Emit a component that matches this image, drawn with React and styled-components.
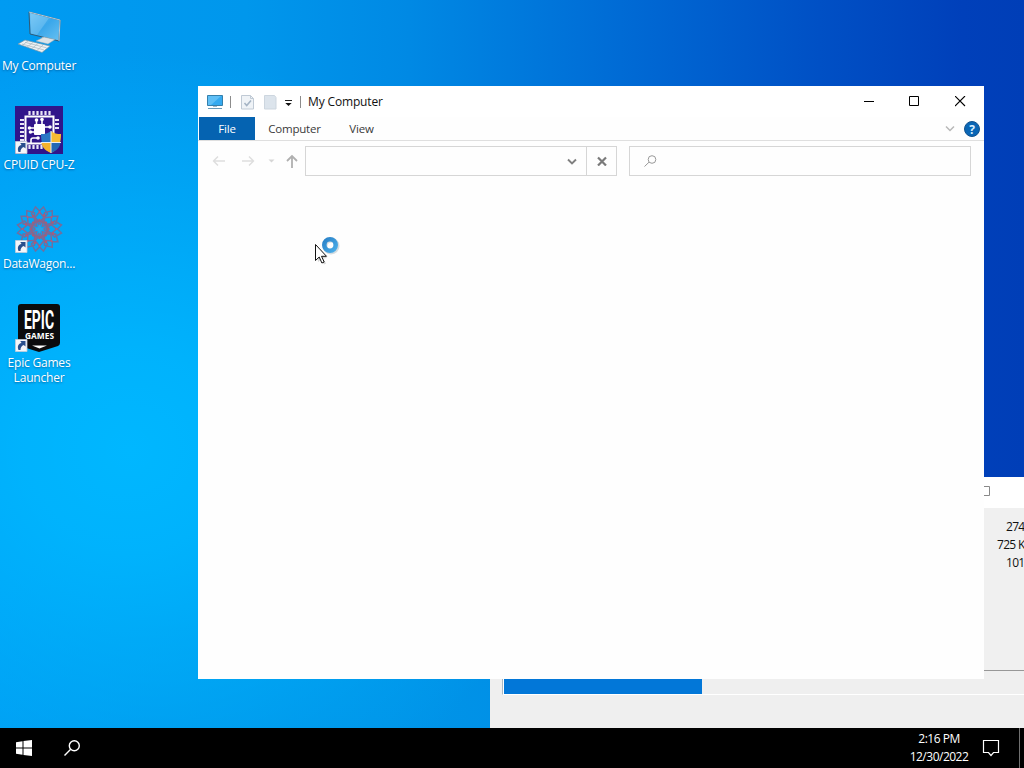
import React from 'react'
import styled, { createGlobalStyle } from 'styled-components'

const GlobalStyle = createGlobalStyle`
  * {
    box-sizing: border-box;
  }

  body {
    margin: 0;
    overflow: hidden;
    font-family: 'Open Sans', 'Noto Sans', sans-serif;
    font-size: 12px;
  }

  svg {
    display: block;
    flex: none;
  }
`

const Screen = styled.div`
  width: 1024px;
  height: 768px;
  display: flex;
  flex-direction: column;
  overflow: hidden;
`

const Desktop = styled.main`
  position: relative;
  flex: 1;
  overflow: hidden;
  background:
    radial-gradient(ellipse 430px 400px at 130px 450px, #00b7ff 0%, rgba(0, 183, 255, 0.85) 25%, rgba(0, 175, 250, 0) 100%),
    radial-gradient(ellipse 420px 300px at 380px 728px, #0094e8 0%, rgba(0, 148, 232, 0.8) 40%, rgba(0, 148, 232, 0) 100%),
    linear-gradient(90deg, #009bf2 0%, #0097ec 24%, #0089e4 40%, #0069d4 62%, #0050c5 80%, #0040ba 94%, #003eb7 100%);
`

const IconColumn = styled.div`
  width: 78px;
  padding-top: 7px;
  display: flex;
  flex-direction: column;
`

const Shortcut = styled.div`
  height: 99px;
  display: flex;
  flex-direction: column;
  align-items: center;
  gap: 3px;
`

const ShortcutLabel = styled.span`
  width: 78px;
  color: white;
  line-height: 15px;
  text-align: center;
  white-space: pre;
  letter-spacing: -0.2px;
  text-shadow: 0 1px 2px rgba(0, 40, 90, 0.5);
`

const Window = styled.section`
  position: absolute;
  left: ${props => props.$x}px;
  top: ${props => props.$y}px;
  width: ${props => props.$width}px;
  height: ${props => props.$height}px;
  display: flex;
  flex-direction: column;
  background: ${props => props.$background || '#fefefe'};
`

const TitleBar = styled.header`
  height: 31px;
  flex: none;
  display: flex;
  align-items: center;
  padding-left: 9px;
  background: #fff;
`

const Separator = styled.span`
  width: 1px;
  height: 12px;
  margin: 0 ${props => props.$right}px 0 ${props => props.$left}px;
  background: #8c8c8c;
`

const WindowTitle = styled.h1`
  flex: 1;
  margin: 0;
  font-size: 12px;
  font-weight: 400;
  letter-spacing: -0.15px;
  color: #111;
`

const CaptionButton = styled.span`
  width: 46px;
  height: 31px;
  display: flex;
  align-items: center;
  justify-content: center;
`

const Ribbon = styled.nav`
  height: 24px;
  flex: none;
  display: flex;
  padding-left: 1px;
  border-bottom: 1px solid #dfdfdf;
  font-size: 11.5px;
  letter-spacing: -0.2px;
`

const Tab = styled.span`
  width: ${props => props.$width}px;
  height: 23px;
  line-height: 24px;
  text-align: center;
  color: ${props => (props.$active ? '#fff' : '#3a3a3a')};
  background: ${props => (props.$active ? '#0563b1' : 'transparent')};
`

const RibbonTools = styled.div`
  display: flex;
  align-items: center;
  gap: 9px;
  margin-left: auto;
  padding-right: 4px;
`

const AddressRow = styled.div`
  display: flex;
  align-items: center;
  height: 40px;
  padding: 0 13px 0 14px;
`

const NavArrows = styled.div`
  width: 93px;
  flex: none;
`

const AddressBox = styled.div`
  width: 312px;
  height: 30px;
  display: flex;
  justify-content: flex-end;
  align-items: center;
  border: 1px solid #d6d6d6;
`

const StopButton = styled.span`
  width: 30px;
  height: 28px;
  margin-left: 9px;
  display: flex;
  align-items: center;
  justify-content: center;
  border-left: 1px solid #d6d6d6;
`

const SearchBox = styled.div`
  flex: 1;
  height: 30px;
  margin-left: 12px;
  padding-left: 14px;
  display: flex;
  align-items: center;
  border: 1px solid #d6d6d6;
`

const CopyTitle = styled.div`
  height: 31px;
  flex: none;
  display: flex;
  align-items: center;
  padding: 0 0 3px 491px;
  background: #fff;
`

const CopyDetails = styled.div`
  height: 163px;
  flex: none;
  padding-top: 10px;
  border-bottom: 1px solid #979797;
  background: #f0f0f0;
  color: #111;
`

const CopyStat = styled.div`
  line-height: 18px;
  height: 18px;
  padding-left: ${props => props.$indent}px;
  letter-spacing: -0.7px;
  white-space: nowrap;
`

const ProgressTrack = styled.div`
  height: 24px;
  margin-left: 12px;
  border-left: 1px solid #a9b8c4;
  border-bottom: 1px solid #fff;
`

const ProgressFill = styled.div`
  width: 199px;
  height: 23px;
  background: #0277d8;
  border-left: 1px solid #fff;
`

const Pointer = styled.div`
  position: absolute;
  left: 313px;
  top: 235px;
`

const Taskbar = styled.footer`
  height: 40px;
  flex: none;
  display: flex;
  align-items: center;
  background: #000;
  color: #fff;
`

const TaskButton = styled.span`
  width: 48px;
  display: flex;
  justify-content: center;
`

const Tray = styled.div`
  height: 40px;
  margin-left: auto;
  display: flex;
  align-items: center;
`

const Clock = styled.div`
  width: 74px;
  display: flex;
  flex-direction: column;
  align-items: center;
  line-height: 18px;
  letter-spacing: -0.5px;
`

const ShowDesktop = styled.span`
  width: 5px;
  height: 40px;
  margin-left: 13px;
  border-left: 1px solid #707070;
`

const ShortcutArrow = () => (
    <g>
        <path d="M.5 35.500h11.500v12H.5z" fill="#f4f6fa" stroke="#c3ccd8" strokeWidth=".8" />
        <path d="M3.500 46c-1.500-4 0-6.500 3-7L5.300 37H10.500v5.500L8.700 41C6.500 42 5.500 43.500 5.500 46z" fill="#294f8d" />
    </g>
)

const ComputerIcon = () => (
    <svg width="48" height="48" viewBox="0 0 48 48">
        <defs>
            <linearGradient id="screen" x1="0" y1="0" x2="1" y2="1">
                <stop offset="0" stopColor="#6fc4f5" />
                <stop offset=".5" stopColor="#3aa7ea" />
                <stop offset="1" stopColor="#68c1f2" />
            </linearGradient>
        </defs>
        <path d="M14 5l31 8-1 21-29-7z" fill="url(#screen)" stroke="#2f5a77" strokeWidth="1" />
        <path d="M14 5l31 8-1 21" fill="none" stroke="#b9cad5" strokeWidth="1" />
        <path d="M15.500 6.500L34 11 22 28l-6-1.500z" fill="#a4dcf9" opacity=".3" />
        <path d="M27 30l6 2 1 3h-9z" fill="#b6c1c8" />
        <path d="M21 34l8-4 11 2.500-7 4.500z" fill="#dce3e7" stroke="#8fa4b1" strokeWidth=".5" />
        <path d="M3 37l7-4 25 6-8 6.500z" fill="#eef2f4" stroke="#6f93a9" strokeWidth=".7" />
        <path d="M7 37l22 6M10 35.300l21.500 5.500M13 34l-6 4.500M18 35.500l-6 4.500M23 36.500l-6 5M28 38l-6 5.500" stroke="#a9b8c0" strokeWidth=".7" />
    </svg>
)

const CpuIcon = () => (
    <svg width="48" height="48" viewBox="0 0 48 48">
        <path d="M0 0h48v48H0z" fill="#30158a" />
        <path
            d="M14.500 5v4M18.500 5v4M22.500 5v4M26.500 5v4M30.500 5v4M34.500 5v4M5 14h4M5 18h4M5 22h4M5 26h4M5 30h4M5 34h4M40 14h4M40 18h4M40 22h4M14.500 39v4M18.500 39v4M22.500 39v4M26.500 39v4"
            stroke="#e9e5f5"
            strokeWidth="2.200"
        />
        <path d="M10.500 37.500V10.500h28v27z" fill="none" stroke="#fff" strokeWidth="2" />
        <rect x="19" y="18" width="11" height="11" rx="1" fill="#fff" />
        <path d="M21.500 18v-4M27 18v-6M19 22h-6M19 26h-5M30 21h6M24 32h-6q-2 0-2 2v3" fill="none" stroke="#fff" strokeWidth="1.600" />
        <g fill="#fff">
            <circle cx="21.500" cy="14" r="1.800" />
            <circle cx="27" cy="13.500" r="1.800" />
            <circle cx="14.500" cy="22" r="1.800" />
            <circle cx="15.500" cy="26" r="1.800" />
            <circle cx="35" cy="21" r="1.800" />
            <circle cx="23" cy="32" r="1.800" />
        </g>
        <path d="M36 25c3 2.500 6 3 10 3 0 9-2 15-10 19z" fill="#f7bc33" />
        <path d="M36 25c-3 2.500-6 3-10 3 0 9 2 15 10 19z" fill="#2976c5" />
        <path d="M36 37h9.500c-.8 4.500-3.500 7.500-9.500 10z" fill="#2468b4" />
        <path d="M36 37h-9.500c.8 4.500 3.500 7.500 9.500 10z" fill="#f6b32b" />
        <path d="M36 25v22M26 36.500h20" stroke="#e9edf2" strokeWidth="1" />
        <ShortcutArrow />
    </svg>
)

const petals = Array.from({ length: 8 }, (_, i) => i * 45)

const WagonIcon = () => (
    <svg width="48" height="48" viewBox="0 0 48 48">
        <g fill="none" stroke="#6f6f9f" strokeWidth="1.500">
            {petals.map(angle => (
                <g key={angle} transform={`rotate(${angle} 24.500 24)`}>
                    <path d="M24.500 17l-8-8 4-7 4 4 4-4 4 7z" />
                    <path d="M19.500 13l5-6 5 6-5 7z" stroke="#7f6a98" />
                    <circle cx="24.500" cy="7" r="1" fill="#b95b78" stroke="none" />
                    <circle cx="18" cy="11" r="1.200" fill="#b8566f" stroke="none" />
                    <circle cx="24.500" cy="15" r="1.200" fill="#b8566f" stroke="none" />
                </g>
            ))}
            <circle cx="24.500" cy="24" r="8" stroke="#8d6587" />
        </g>
        <path d="M24.500 19l1.500 3.500 3.500 1.500-3.500 1.500-1.500 3.500-1.500-3.500-3.500-1.500 3.500-1.500z" fill="#2aa2e4" />
        <ShortcutArrow />
    </svg>
)

const EpicIcon = () => (
    <svg width="48" height="48" viewBox="0 0 48 48">
        <path d="M6 0h36q3 0 3 3v36q0 2-2 3L24 48 5 42q-2-1-2-3V3q0-3 3-3z" fill="#0b0b0d" />
        <text x="24" y="25" textAnchor="middle" textLength="30" lengthAdjust="spacingAndGlyphs" fontFamily="Roboto, sans-serif" fontWeight="700" fontSize="26" fill="#fff">
            EPIC
        </text>
        <text x="24.500" y="35" textAnchor="middle" textLength="29" lengthAdjust="spacingAndGlyphs" fontFamily="Open Sans, sans-serif" fontWeight="700" fontSize="8" fill="#fff">
            GAMES
        </text>
        <path d="M17 41.500h15l-7.500 3z" fill="#fff" />
        <ShortcutArrow />
    </svg>
)

const shortcuts = [
    { label: 'My Computer', icon: <ComputerIcon /> },
    { label: 'CPUID CPU-Z', icon: <CpuIcon /> },
    { label: 'DataWagon...', icon: <WagonIcon /> },
    { label: 'Epic Games\nLauncher', icon: <EpicIcon /> }
]

const copyStats = [
    { text: '274 MB', indent: 516 },
    { text: '725 KB', indent: 507 },
    { text: '101 MB', indent: 516 }
]

const QuickAccess = () => (
    <>
        <svg width="16" height="16" viewBox="0 0 16 16">
            <path d="M.5 1.500h15v10H.5z" fill="#35aaf0" stroke="#3580ac" />
            <path d="M1 2h13L4 11H1z" fill="#7bcdfa" opacity=".6" />
            <path d="M6 12h4v1H6z" fill="#a4b8c5" />
            <path d="M1 14.500h14" stroke="#6799b7" />
        </svg>
        <Separator $left={7} $right={10} />
        <svg width="36" height="16" viewBox="0 0 36 16">
            <path d="M.5 1.500h9l3 3v10.500H.5z" fill="#eff3f7" stroke="#c0cad5" />
            <path d="M9.500 1.500v3h3" fill="none" stroke="#c0cad5" />
            <path d="M3.500 9l2.200 2.500L10 6.500" fill="none" stroke="#a5b4c5" strokeWidth="1.600" />
            <path d="M23.500 1.500h10l1.500 2v11.500H23.500z" fill="#dce4ec" stroke="#cdd6df" />
        </svg>
        <svg width="16" height="16" viewBox="0 0 16 16">
            <path d="M8 6.500h7" stroke="#222" />
            <path d="M8.300 9h6.400l-3.200 3z" fill="#111" />
        </svg>
        <Separator $left={7} $right={7} />
    </>
)

const Explorer = () => (
    <Window $x={198} $y={86} $width={786} $height={593}>
        <TitleBar>
            <QuickAccess />
            <WindowTitle>My Computer</WindowTitle>
            <CaptionButton>
                <svg width="12" height="12" viewBox="0 0 12 12">
                    <path d="M1 5.500h10" stroke="#000" />
                </svg>
            </CaptionButton>
            <CaptionButton>
                <svg width="12" height="12" viewBox="0 0 12 12">
                    <path d="M.5.5h9v9h-9z" fill="none" stroke="#000" />
                </svg>
            </CaptionButton>
            <CaptionButton>
                <svg width="12" height="12" viewBox="0 0 12 12">
                    <path d="M0 0l10 10M10 0L0 10" stroke="#000" strokeWidth="1.100" />
                </svg>
            </CaptionButton>
        </TitleBar>
        <Ribbon>
            <Tab $width={56} $active>File</Tab>
            <Tab $width={79}>Computer</Tab>
            <Tab $width={55}>View</Tab>
            <RibbonTools>
                <svg width="10" height="8" viewBox="0 0 10 8">
                    <path d="M1 1.500l4 4 4-4" fill="none" stroke="#b8b8b8" strokeWidth="1.500" />
                </svg>
                <svg width="16" height="16" viewBox="0 0 16 16">
                    <circle cx="8" cy="8" r="7.500" fill="#0a66b5" stroke="#12528e" />
                    <text x="8" y="12.500" textAnchor="middle" fontSize="12" fontWeight="700" fill="#d9efff">?</text>
                </svg>
            </RibbonTools>
        </Ribbon>
        <AddressRow>
            <NavArrows>
                <svg width="88" height="16" viewBox="0 0 88 16" fill="none">
                    <path d="M13 8H1.500M6 3.500L1.500 8 6 12.500M30 8h11.500M37 3.500L41.500 8 37 12.500" stroke="#dedede" strokeWidth="1.400" />
                    <path d="M56.500 6.500h6L59.500 9.500z" fill="#d6d6d6" />
                    <path d="M80 15V3M75 8l5-5 5 5" stroke="#b0b0b0" strokeWidth="1.800" />
                </svg>
            </NavArrows>
            <AddressBox>
                <svg width="10" height="8" viewBox="0 0 10 8">
                    <path d="M1 2.500l4 4 4-4" fill="none" stroke="#808080" strokeWidth="1.900" />
                </svg>
                <StopButton>
                    <svg width="10" height="10" viewBox="0 0 10 10">
                        <path d="M1 1.500l8 8M9 1.500l-8 8" stroke="#7a7a7a" strokeWidth="2.200" />
                    </svg>
                </StopButton>
            </AddressBox>
            <SearchBox>
                <svg width="13" height="12" viewBox="0 0 13 12" fill="none" stroke="#999">
                    <circle cx="8" cy="4.500" r="3.800" />
                    <path d="M5 7.200L.5 11.500" />
                </svg>
            </SearchBox>
        </AddressRow>
    </Window>
)

const CopyWindow = () => (
    <Window $x={490} $y={477} $width={580} $height={251} $background="#efefef">
        <CopyTitle>
            <svg width="10" height="10" viewBox="0 0 10 10">
                <path d="M.5.5h8v9h-8z" fill="none" stroke="#888" />
            </svg>
        </CopyTitle>
        <CopyDetails>
            {copyStats.map(stat => (
                <CopyStat key={stat.text} $indent={stat.indent}>{stat.text}</CopyStat>
            ))}
        </CopyDetails>
        <ProgressTrack>
            <ProgressFill />
        </ProgressTrack>
    </Window>
)

const BusyPointer = () => (
    <Pointer>
        <svg width="30" height="32" viewBox="0 0 30 32">
            <defs>
                <linearGradient id="ring" x1="0" y1="0" x2="1" y2="1">
                    <stop offset="0" stopColor="#2b83c9" />
                    <stop offset="1" stopColor="#49ace8" />
                </linearGradient>
            </defs>
            <circle cx="18" cy="11" r="6" fill="none" stroke="#b9c4cc" strokeWidth="5" opacity=".6" />
            <circle cx="17" cy="10" r="5.700" fill="none" stroke="url(#ring)" strokeWidth="4.600" />
            <path d="M4 12l10 11-4 .5 3 5-2 1-3-5L5 27z" fill="#999" opacity=".4" />
            <path d="M2.500 9.500v16l3.700-3.500 2.700 6 2.300-1-2.700-5.700h5z" fill="#fff" stroke="#111" />
        </svg>
    </Pointer>
)

const App = () => {
    return (
        <Screen>
            <GlobalStyle />
            <Desktop>
                <IconColumn>
                    {shortcuts.map(item => (
                        <Shortcut key={item.label}>
                            {item.icon}
                            <ShortcutLabel>{item.label}</ShortcutLabel>
                        </Shortcut>
                    ))}
                </IconColumn>
                <CopyWindow />
                <Explorer />
                <BusyPointer />
            </Desktop>
            <Taskbar>
                <TaskButton>
                    <svg width="16" height="16" viewBox="0 0 16 16" fill="#fff">
                        <path d="M0 2.200L6.500 1.300v6.200H0zM7.500 1.100L16 0v7.500H7.500zM0 8.500h6.500v6.200L0 13.800zM7.500 8.500H16V16l-8.500-1.100z" />
                    </svg>
                </TaskButton>
                <TaskButton>
                    <svg width="16" height="16" viewBox="0 0 16 16" fill="none" stroke="#fff" strokeWidth="1.400">
                        <circle cx="10.300" cy="5.700" r="5" />
                        <path d="M6.700 9.300L.5 15.500" />
                    </svg>
                </TaskButton>
                <Tray>
                    <Clock>
                        <span>2:16 PM</span>
                        <span>12/30/2022</span>
                    </Clock>
                    <svg width="30" height="17" viewBox="0 0 30 17">
                        <path d="M7.500.5h15v12h-5l-2.500 3-2.500-3h-5z" fill="none" stroke="#fff" strokeWidth="1.200" />
                    </svg>
                    <ShowDesktop />
                </Tray>
            </Taskbar>
        </Screen>
    )
}

export default App
